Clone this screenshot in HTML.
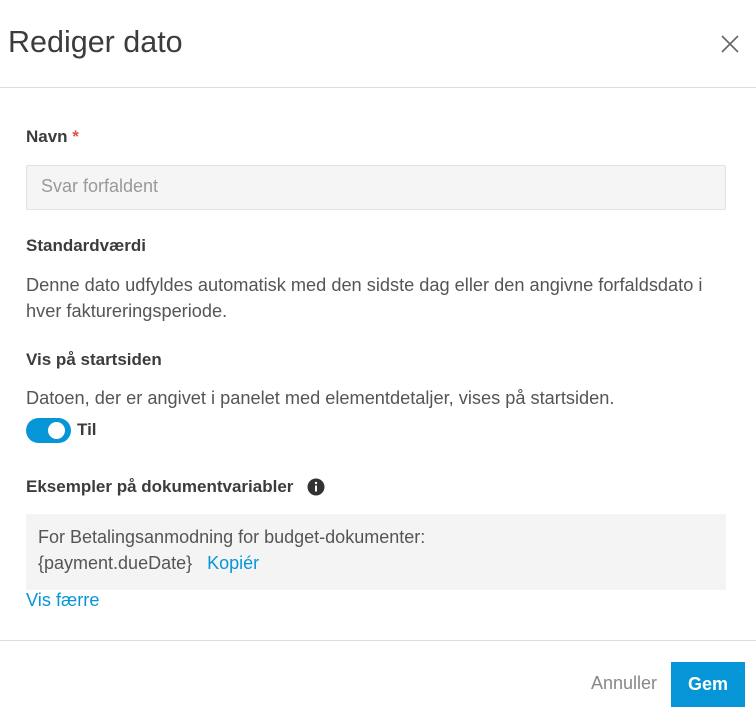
<!DOCTYPE html>
<html><head><meta charset="utf-8"><style>
*{margin:0;padding:0;box-sizing:border-box}
body{width:756px;height:728px;background:#fff;font-family:"Liberation Sans",sans-serif;color:#3c3c3c;position:relative;overflow:hidden}
.a{position:absolute;white-space:nowrap}
.t{font-size:30.5px;left:8px;top:25px;color:#3c3c3c}
.hr{position:absolute;left:0;right:0;height:1px;background:#ddd}
.lbl{font-size:17px;font-weight:bold;color:#3c3c3c;left:26px}
.txt{font-size:18.2px;color:#555;left:26px}
.in{position:absolute;left:26px;top:165px;width:700px;height:45px;background:#f5f5f5;border:1px solid #e2e2e2;border-radius:2px;font-size:18px;color:#999;padding:10px 14px}
.box{position:absolute;left:26px;top:514px;width:700px;height:76px;background:#f4f4f4;padding:10px 12px;font-size:18px;color:#555;line-height:26px}
a{color:#0696d7;text-decoration:none}
</style></head><body>
<div class="a t">Rediger dato</div>
<svg class="a" style="left:720px;top:34px" width="20" height="20" viewBox="0 0 20 20"><path d="M2 2L18 18M18 2L2 18" stroke="#666" stroke-width="1.6"/></svg>
<div class="hr" style="top:87px"></div>
<div class="a lbl" style="top:127px">Navn <span style="color:#e4504d">*</span></div>
<div class="in">Svar forfaldent</div>
<div class="a lbl" style="top:236px">Standardværdi</div>
<div class="a txt" style="top:272px;line-height:26px;white-space:normal;width:700px">Denne dato udfyldes automatisk med den sidste dag eller den angivne forfaldsdato i hver faktureringsperiode.</div>
<div class="a lbl" style="top:350px">Vis på startsiden</div>
<div class="a txt" style="top:388px">Datoen, der er angivet i panelet med elementdetaljer, vises på startsiden.</div>
<div class="a" style="left:26px;top:418px;width:45px;height:25px;border-radius:13px;background:#0696d7"></div>
<div class="a" style="left:48px;top:422px;width:17px;height:17px;border-radius:50%;background:#fff"></div>
<div class="a lbl" style="left:77px;top:420px">Til</div>
<div class="a lbl" style="top:477px">Eksempler på dokumentvariabler</div>
<svg class="a" style="left:307px;top:478px" width="18" height="18" viewBox="0 0 18 18"><circle cx="9" cy="9" r="8.5" fill="#333"/><rect x="8" y="7.5" width="2" height="6" fill="#fff"/><circle cx="9" cy="5" r="1.2" fill="#fff"/></svg>
<div class="box">For Betalingsanmodning for budget-dokumenter:<br>{payment.dueDate}&nbsp;&nbsp; <a>Kopiér</a></div>
<div class="a txt" style="top:590px"><a>Vis færre</a></div>
<div class="hr" style="top:640px"></div>
<div class="a" style="left:591px;top:673px;font-size:18px;color:#888">Annuller</div>
<div class="a" style="left:671px;top:662px;width:74px;height:45px;background:#0696d7;color:#fff;font-weight:bold;font-size:18px;text-align:center;line-height:45px">Gem</div>
</body></html>
